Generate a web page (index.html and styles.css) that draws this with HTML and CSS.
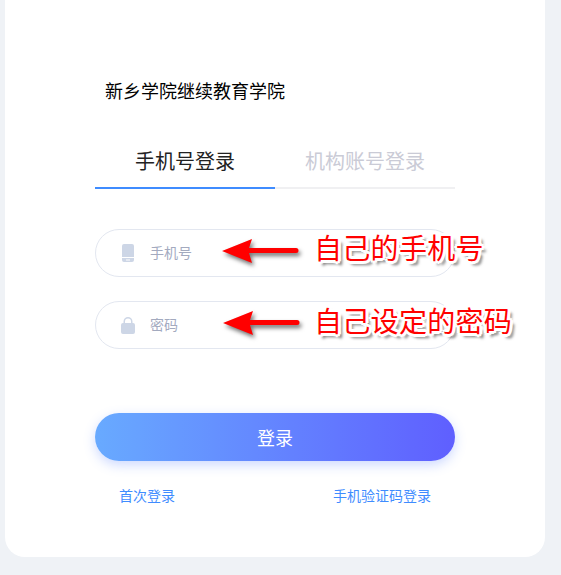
FILE: index.html
```html
<!DOCTYPE html>
<html lang="zh-CN">
<head>
    <meta charset="UTF-8">
    <title>登录</title>
    <link rel="stylesheet" href="styles.css">
</head>
<body>
    <div class="card">
        <div class="school">新乡学院继续教育学院</div>
        <div class="tabs">
            <div class="tab active">手机号登录</div>
            <div class="tab">机构账号登录</div>
        </div>
        <div class="field">
            <svg class="icon" width="12" height="18" viewBox="0 0 12 18">
                <path fill="#cdd6e6" d="M2 0h8a2 2 0 0 1 2 2v11H0V2a2 2 0 0 1 2-2zM0 14h12v2a2 2 0 0 1-2 2H2a2 2 0 0 1-2-2zm4 1.500v1h4v-1z"/>
            </svg>
            <span class="placeholder">手机号</span>
        </div>
        <div class="field">
            <svg class="icon" width="14" height="17" viewBox="0 0 14 17">
                <path fill="#cdd6e6" d="M7 0a4.500 4.500 0 0 1 4.500 4.500V6H12a2 2 0 0 1 2 2v7a2 2 0 0 1-2 2H2a2 2 0 0 1-2-2V8a2 2 0 0 1 2-2h.5V4.500A4.500 4.500 0 0 1 7 0zm0 1.500a3 3 0 0 0-3 3V6h6V4.500a3 3 0 0 0-3-3z"/>
            </svg>
            <span class="placeholder">密码</span>
        </div>
        <button class="login">登录</button>
        <div class="links">
            <a class="link">首次登录</a>
            <a class="link">手机验证码登录</a>
        </div>

        <svg class="arrow arrow-phone" width="80" height="32" viewBox="0 0 80 32">
            <path fill="#f00" d="M0 15 30 3 27 12H74a2.500 2.500 0 0 1 0 5H27L30 27z"/>
        </svg>
        <svg class="arrow arrow-pass" width="80" height="32" viewBox="0 0 80 32">
            <path fill="#f00" d="M0 15 30 3 27 12H74a2.500 2.500 0 0 1 0 5H27L30 27z"/>
        </svg>
        <div class="note note-phone">自己的手机号</div>
        <div class="note note-pass">自己设定的密码</div>
    </div>
</body>
</html>
```

FILE: styles.css
```css
html, body {
    height: 100%;
}
body {
    margin: 0;
    overflow: hidden;
    background: #eff2f6;
    font-family: "Noto Sans CJK SC", "Liberation Sans", sans-serif;
}
.card {
    position: relative;
    box-sizing: border-box;
    width: 540px;
    height: 597px;
    margin: -40px 0 0 5px;
    padding: 115px 90px 0;
    background: #fff;
    border-radius: 20px;
}
.school {
    margin-left: 10px;
    font-size: 18px;
    line-height: 30px;
    color: #000;
}
.tabs {
    display: flex;
    margin-top: 34px;
    border-bottom: 2px solid #f0f0f2;
}
.tab {
    width: 180px;
    height: 48px;
    margin-bottom: -2px;
    font-size: 20px;
    line-height: 44px;
    text-align: center;
    color: #cacbd6;
}
.tab.active {
    color: #222;
    border-bottom: 2px solid #3f8cff;
}
.field {
    display: flex;
    align-items: center;
    box-sizing: border-box;
    height: 48px;
    margin-top: 24px;
    padding-left: 25px;
    border: 1px solid #e3e7f0;
    border-radius: 24px;
}
.tabs + .field {
    margin-top: 40px;
}
.icon {
    flex: none;
    width: 14px;
}
.placeholder {
    margin: -2px 0 0 15px;
    font-size: 14px;
    line-height: 20px;
    color: #a3aabf;
}
.login {
    display: block;
    width: 360px;
    height: 48px;
    margin-top: 64px;
    padding: 0;
    border: none;
    border-radius: 24px;
    background: linear-gradient(90deg, #68aaff, #5f5fff);
    box-shadow: 0 4px 12px rgba(90, 130, 255, 0.3);
    font-family: inherit;
    font-size: 18px;
    color: #fff;
}
.links {
    display: flex;
    justify-content: space-between;
    padding: 0 24px;
    margin-top: 24px;
}
.link {
    font-size: 14px;
    line-height: 20px;
    color: #3f8cff;
}
.arrow {
    position: absolute;
    filter: drop-shadow(2px 3px 2px rgba(0, 0, 0, 0.55));
}
.arrow-phone {
    left: 217px;
    top: 276px;
}
.arrow-pass {
    left: 218px;
    top: 348px;
}
.note {
    position: absolute;
    left: 309px;
    font-size: 28px;
    letter-spacing: 0.3px;
    line-height: 40px;
    white-space: nowrap;
    color: #f00;
    text-shadow: 3px 0 0 #fff, -3px 0 0 #fff, 0 3px 0 #fff, 0 -3px 0 #fff,
        2px 2px 0 #fff, -2px 2px 0 #fff, 2px -2px 0 #fff, -2px -2px 0 #fff,
        4px 4px 3px rgba(0, 0, 0, 0.6);
}
.note-phone {
    top: 267px;
}
.note-pass {
    top: 340px;
}
```
